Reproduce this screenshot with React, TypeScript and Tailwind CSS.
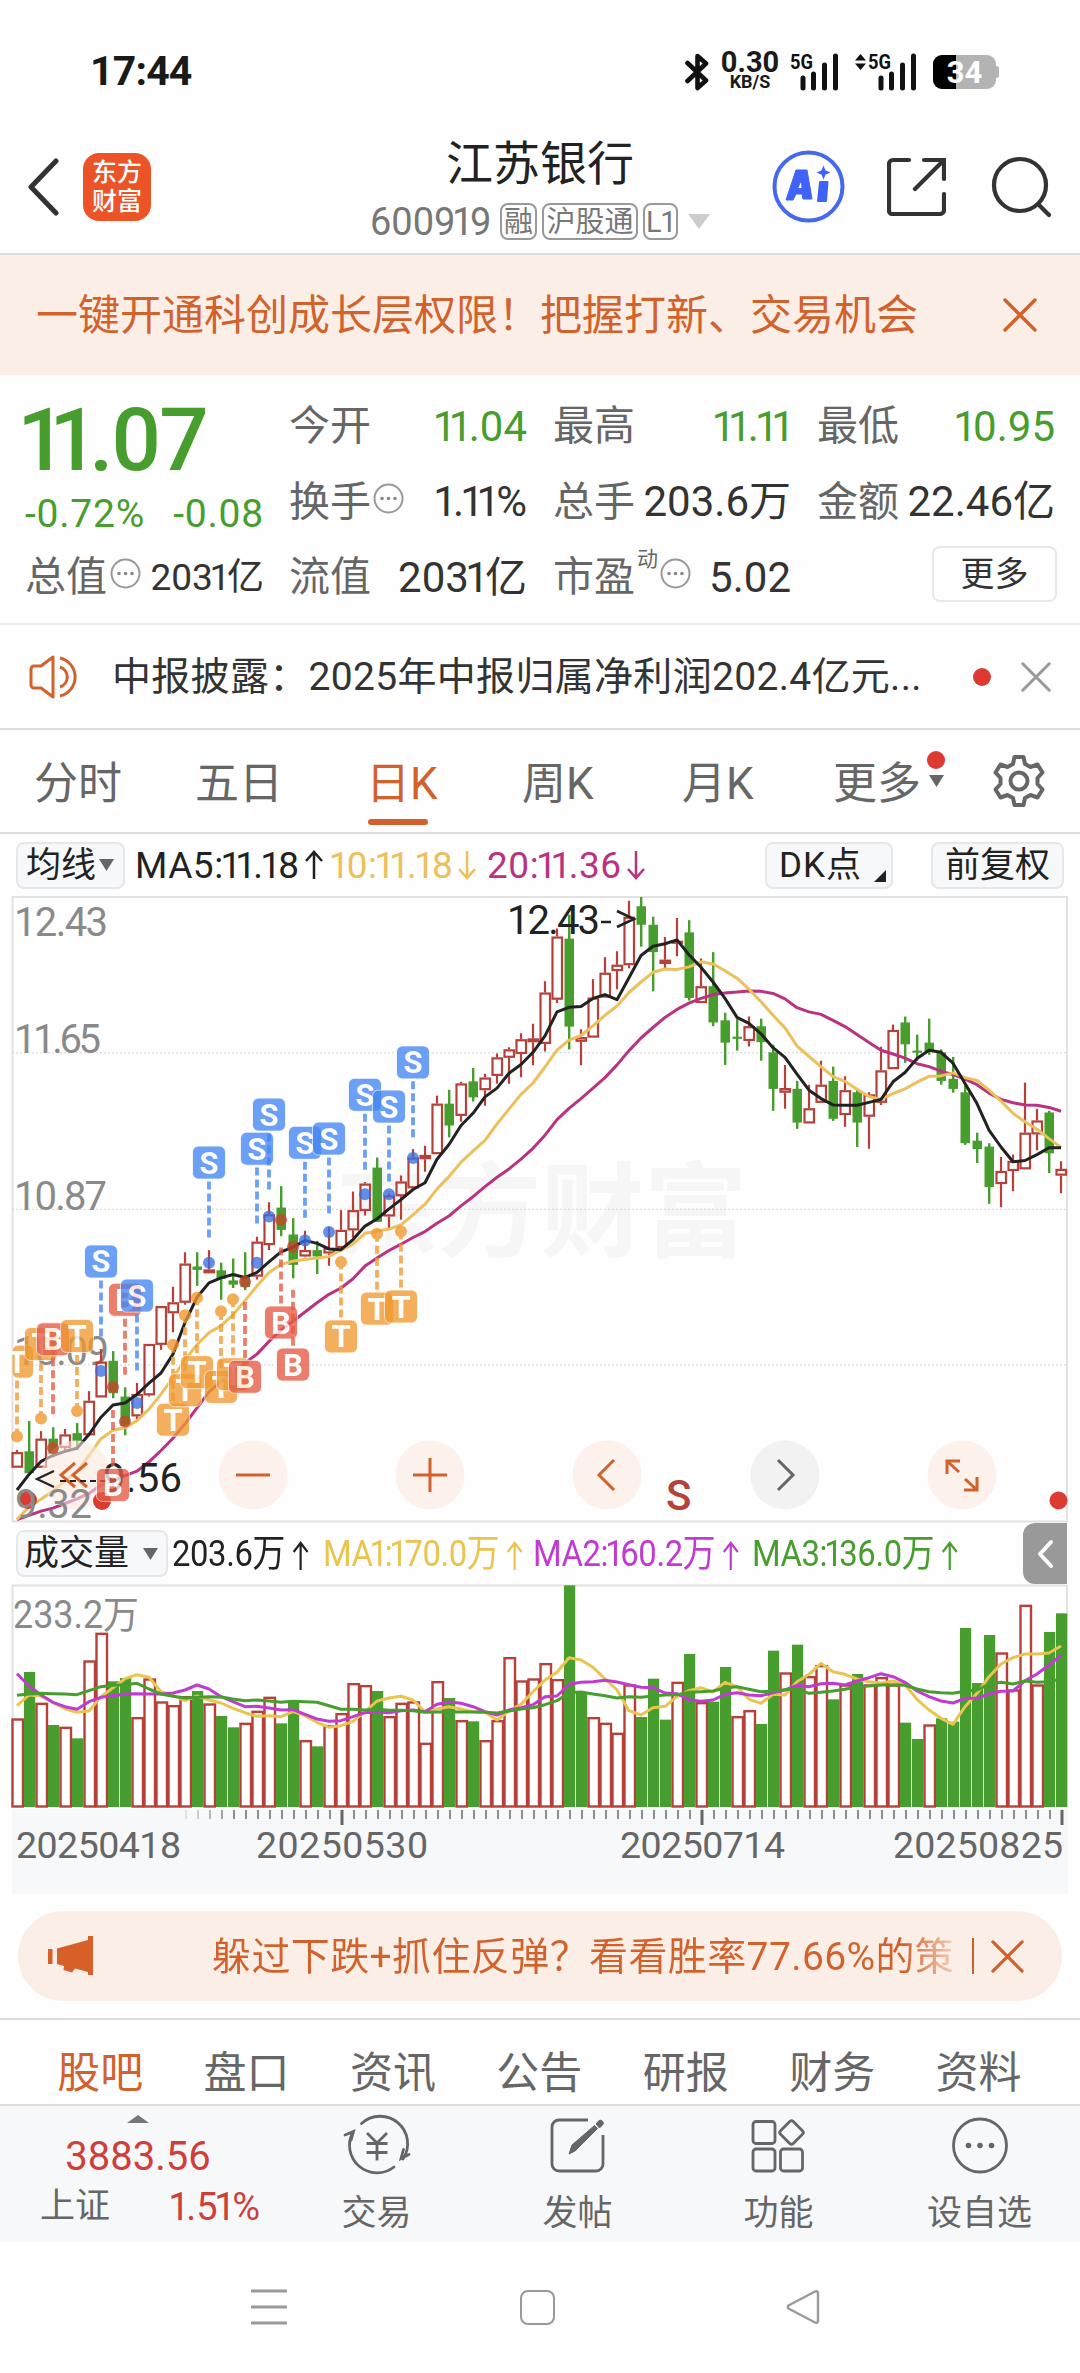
import React from 'react';

type Candle = [kind: 'r' | 'g', high: number, top: number, bottom: number, low: number];

// chart levels, measured downwards from the top of the price panel
const candles: Candle[] = [
  ['r', 1355, 1360, 1397, 1397], ['g', 1286, 1358, 1410, 1410], ['r', 1310, 1328, 1397, 1397], ['g', 1301, 1328, 1365, 1372],
  ['r', 1305, 1318, 1350, 1355], ['g', 1291, 1315, 1333, 1355], ['r', 1215, 1238, 1320, 1320], ['r', 1115, 1145, 1230, 1230],
  ['g', 1120, 1143, 1220, 1232], ['g', 1206, 1228, 1298, 1320], ['r', 1196, 1222, 1275, 1283], ['r', 1103, 1103, 1225, 1228],
  ['r', 1013, 1013, 1105, 1117], ['r', 967, 1004, 1030, 1075], ['r', 885, 912, 1005, 1010], ['g', 885, 919, 927, 965],
  ['r', 880, 926, 935, 935], ['g', 910, 928, 948, 998], ['g', 900, 952, 962, 970], ['g', 885, 945, 968, 975],
  ['r', 848, 860, 943, 950], ['r', 766, 795, 868, 880], ['g', 728, 779, 832, 847], ['g', 804, 843, 915, 947],
  ['r', 834, 880, 895, 897], ['g', 858, 880, 895, 937], ['r', 825, 875, 888, 917], ['r', 785, 832, 875, 875],
  ['r', 741, 785, 833, 850], ['r', 718, 722, 787, 798], ['g', 660, 684, 813, 813], ['r', 745, 750, 800, 830],
  ['r', 703, 717, 752, 808], ['r', 640, 660, 733, 733], ['r', 632, 654, 664, 694], ['r', 513, 532, 652, 652],
  ['g', 499, 532, 584, 612], ['r', 480, 484, 561, 575], ['g', 447, 479, 517, 527], ['r', 461, 470, 500, 537],
  ['r', 413, 422, 466, 485], ['r', 398, 403, 423, 485], ['r', 365, 379, 414, 469], ['r', 342, 377, 386, 441],
  ['r', 241, 268, 390, 408], ['r', 116, 135, 285, 293], ['g', 83, 140, 349, 403], ['r', 355, 374, 385, 441],
  ['r', 236, 280, 375, 375], ['r', 184, 221, 280, 280], ['r', 170, 202, 217, 260], ['r', 50, 88, 203, 210],
  ['g', 41, 63, 107, 159], ['g', 88, 107, 172, 265], ['r', 136, 190, 200, 212], ['r', 91, 145, 150, 182],
  ['g', 96, 125, 281, 287], ['r', 187, 253, 293, 293], ['g', 172, 253, 339, 348], ['g', 316, 334, 387, 440],
  ['g', 331, 373, 378, 406], ['r', 325, 348, 383, 396], ['g', 330, 348, 386, 430], ['g', 392, 410, 497, 549],
  ['r', 440, 495, 506, 544], ['g', 478, 497, 577, 592], ['r', 487, 543, 579, 579], ['r', 430, 487, 530, 530],
  ['g', 444, 478, 568, 573], ['r', 467, 500, 559, 587], ['g', 500, 505, 577, 635], ['r', 505, 510, 563, 639],
  ['r', 397, 453, 530, 535], ['r', 344, 357, 450, 450], ['g', 325, 339, 391, 435], ['g', 368, 406, 411, 430],
  ['g', 330, 387, 408, 416], ['g', 403, 410, 478, 487], ['g', 421, 473, 497, 506], ['g', 485, 505, 626, 630],
  ['g', 601, 620, 640, 673], ['g', 626, 634, 730, 770], ['r', 659, 692, 723, 778], ['r', 653, 668, 692, 740],
  ['r', 482, 601, 688, 688], ['r', 545, 572, 605, 643], ['g', 549, 553, 650, 697], ['r', 669, 687, 703, 745],
];

const ma5 = [1450, 1413, 1382, 1368, 1358, 1351, 1318, 1277, 1248, 1243, 1223, 1196, 1172, 1127, 1052, 992, 958, 946, 938, 945, 933, 908, 884, 873, 857, 864, 877, 879, 855, 823, 806, 782, 760, 736, 720, 664, 629, 584, 555, 516, 495, 460, 439, 410, 371, 314, 303, 301, 282, 273, 285, 233, 180, 158, 152, 143, 178, 208, 243, 282, 327, 341, 366, 399, 422, 462, 500, 520, 535, 536, 536, 529, 522, 480, 458, 425, 405, 410, 436, 484, 532, 595, 635, 670, 667, 653, 637, 637];
const ma10 = [1520, 1490, 1472, 1452, 1428, 1405, 1368, 1328, 1308, 1302, 1285, 1258, 1222, 1183, 1140, 1105, 1076, 1060, 1034, 1000, 965, 933, 914, 906, 902, 899, 895, 880, 865, 840, 835, 830, 820, 796, 771, 735, 705, 671, 645, 619, 580, 545, 510, 483, 445, 405, 381, 370, 347, 322, 300, 268, 243, 220, 212, 213, 207, 195, 200, 216, 234, 260, 290, 322, 352, 395, 420, 444, 468, 479, 498, 515, 522, 508, 497, 481, 467, 466, 459, 470, 477, 500, 526, 555, 575, 593, 615, 636];
const ma20 = [1520, 1510, 1500, 1493, 1482, 1471, 1458, 1438, 1428, 1416, 1405, 1383, 1356, 1327, 1293, 1255, 1217, 1192, 1170, 1148, 1127, 1097, 1070, 1049, 1027, 1005, 985, 970, 948, 918, 899, 881, 866, 850, 836, 816, 799, 775, 753, 729, 707, 687, 664, 638, 607, 570, 543, 520, 495, 470, 440, 406, 376, 351, 327, 308, 293, 282, 273, 269, 267, 264, 265, 270, 283, 304, 314, 320, 334, 349, 368, 387, 405, 414, 424, 437, 444, 455, 463, 474, 487, 507, 522, 530, 535, 536, 541, 550];

// every volume bar by its top edge; colours follow volumeKinds
const volumes = [627, 486, 580, 645, 652, 685, 453, 370, 514, 504, 623, 507, 576, 587, 560, 543, 582, 618, 652, 640, 604, 562, 640, 578, 692, 709, 647, 611, 521, 527, 543, 620, 580, 576, 700, 515, 564, 632, 634, 692, 632, 443, 513, 507, 461, 509, 226, 547, 623, 640, 670, 525, 621, 506, 629, 517, 432, 578, 575, 471, 620, 602, 642, 422, 489, 404, 500, 467, 568, 525, 492, 525, 503, 525, 638, 687, 645, 625, 635, 354, 519, 375, 429, 540, 286, 525, 366, 310];
const volumeKinds = 'rgrgrgrrggrrrrrgrggrrrggrgrrrrgrrrrrgrgrrrrrrrggrrrrgggrgrggrrggrgrrgrgrrrggrgggggrrrrgg';
const vma1 = [587, 555, 558, 578, 596, 607, 603, 560, 533, 506, 494, 502, 545, 556, 572, 558, 570, 579, 595, 608, 619, 617, 620, 605, 617, 637, 652, 647, 634, 605, 573, 564, 559, 570, 605, 597, 590, 597, 605, 607, 630, 603, 583, 545, 510, 487, 443, 450, 472, 507, 540, 602, 615, 593, 589, 560, 542, 533, 546, 517, 530, 568, 580, 553, 555, 515, 493, 460, 485, 493, 507, 515, 520, 513, 524, 568, 600, 625, 643, 590, 550, 500, 462, 443, 432, 432, 429, 408];
const vma2 = [491, 528, 555, 577, 590, 598, 575, 562, 557, 552, 551, 552, 552, 549, 540, 525, 537, 560, 575, 590, 589, 594, 600, 599, 613, 627, 634, 632, 620, 608, 606, 608, 602, 600, 605, 583, 576, 580, 590, 605, 615, 600, 593, 584, 560, 558, 523, 517, 515, 511, 516, 524, 532, 533, 549, 551, 569, 574, 570, 553, 548, 555, 557, 548, 540, 526, 530, 521, 520, 525, 513, 503, 491, 500, 517, 543, 560, 573, 579, 565, 565, 552, 544, 543, 512, 492, 465, 436];
const vma3 = [556, 552, 550, 551, 552, 554, 542, 530, 526, 524, 520, 537, 552, 559, 564, 562, 560, 561, 567, 572, 570, 573, 577, 574, 575, 577, 587, 598, 598, 600, 598, 601, 601, 602, 607, 606, 605, 606, 606, 607, 609, 603, 597, 593, 584, 572, 548, 546, 552, 557, 564, 560, 562, 558, 555, 554, 547, 545, 543, 534, 530, 538, 545, 543, 539, 537, 550, 547, 543, 538, 530, 528, 525, 524, 526, 537, 545, 548, 550, 544, 540, 523, 517, 522, 513, 517, 515, 507];

type Marker = { i: number; text: 'S' | 'B' | 'T'; label: number; dot: number; above: boolean };

const markers: Marker[] = [
  { i: 0, text: 'T', label: 1145, dot: 1323, above: true },
  { i: 2, text: 'T', label: 1103, dot: 1280, above: true },
  { i: 3, text: 'B', label: 1092, dot: 1350, above: true },
  { i: 5, text: 'T', label: 1084, dot: 1262, above: true },
  { i: 7, text: 'S', label: 907, dot: 1167, above: true },
  { i: 8, text: 'B', label: 1438, dot: 1205, above: false },
  { i: 9, text: 'B', label: 998, dot: 1287, above: true },
  { i: 10, text: 'S', label: 988, dot: 1243, above: true },
  { i: 13, text: 'T', label: 1283, dot: 1105, above: false },
  { i: 14, text: 'T', label: 1213, dot: 1035, above: false },
  { i: 15, text: 'T', label: 1170, dot: 993, above: false },
  { i: 16, text: 'S', label: 672, dot: 910, above: true },
  { i: 17, text: 'T', label: 1205, dot: 1025, above: false },
  { i: 18, text: 'T', label: 1175, dot: 997, above: false },
  { i: 19, text: 'B', label: 1181, dot: 955, above: false },
  { i: 20, text: 'S', label: 639, dot: 910, above: true },
  { i: 21, text: 'S', label: 558, dot: 800, above: true },
  { i: 22, text: 'B', label: 1052, dot: 808, above: false },
  { i: 23, text: 'B', label: 1152, dot: 872, above: false },
  { i: 24, text: 'S', label: 625, dot: 857, above: true },
  { i: 26, text: 'S', label: 615, dot: 837, above: true },
  { i: 27, text: 'T', label: 1085, dot: 908, above: false },
  { i: 29, text: 'S', label: 511, dot: 747, above: true },
  { i: 30, text: 'T', label: 1019, dot: 841, above: false },
  { i: 31, text: 'S', label: 539, dot: 747, above: true },
  { i: 32, text: 'T', label: 1014, dot: 836, above: false },
  { i: 33, text: 'S', label: 434, dot: 661, above: true },
];

const markerColors = {
  S: { box: '#4485f4', dot: '#3b6fe0' },
  B: { box: '#e65a45', dot: '#c8452a' },
  T: { box: '#f09a30', dot: '#f0962a' },
};

const RED = '#b5413a';
const GREEN = '#479d2d';

const px = (i: number) => 17 + i * 12;
const py = (v: number) => 1 + (v - 41) / 2.376;
const vy = (v: number) => (v - 222) / 3;
const line = (values: number[], y: (v: number) => number) => values.map((v, i) => `${px(i)},${y(v).toFixed(1)}`).join(' ');

// the digit 1 is set narrower than the others
const Num = ({ children }: { children: string }) => (
  <span>
    {children.split(/(1)/).map((part, i) => (part === '1' ? <span key={i} className="-mx-[0.09em]">1</span> : part))}
  </span>
);

const More = () => (
  <svg className="shrink-0" width="31" height="31" viewBox="0 0 31 31">
    <circle cx="15.5" cy="15.5" r="14" fill="none" stroke="#999" strokeWidth="2" />
    <circle cx="9" cy="15.5" r="1.8" fill="#888" />
    <circle cx="15.5" cy="15.5" r="1.8" fill="#888" />
    <circle cx="22" cy="15.5" r="1.8" fill="#888" />
  </svg>
);

const Close = ({ size, color }: { size: number; color: string }) => (
  <svg className="shrink-0" width={size} height={size} viewBox="0 0 34 34">
    <path d="M2 2 32 32M32 2 2 32" stroke={color} strokeWidth="3.4" strokeLinecap="round" />
  </svg>
);

const Signal = () => (
  <svg className="overflow-visible" width="50" height="38" viewBox="0 0 50 38">
    <text x="0" y="16" fontSize="21" fontWeight="700" textLength="23" lengthAdjust="spacingAndGlyphs" fill="#111">5G</text>
    <path d="M13 25v10M23.500 21v14M34.500 12v23M45.500 3v32" stroke="#111" strokeWidth="5" strokeLinecap="round" />
  </svg>
);

const StatusBar = () => (
  <div className="flex h-[120px] items-center pt-[23px] pr-[81px] pl-[90px] text-[#1a1a1a]">
    <span className="text-[41px] leading-none font-bold tracking-[-0.02em]">17:44</span>
    <svg className="ml-auto" width="24" height="38" viewBox="0 0 24 38">
      <path d="M2.500 10 21 27.500 12.500 35V3L21 10.500 2.500 28" fill="none" stroke="#111" strokeWidth="4.600" strokeLinecap="round" strokeLinejoin="round" />
    </svg>
    <div className="ml-3 flex w-[58px] flex-col items-center font-bold">
      <span className="text-[29px] leading-[21px]">0.30</span>
      <span className="text-[18px] leading-[18px]">KB/S</span>
    </div>
    <div className="ml-[11px]"><Signal /></div>
    <svg className="ml-[15px]" width="11" height="38" viewBox="0 0 11 38">
      <path d="M0 7.500 5.500 1l5.500 6.500ZM0 10.500l5.500 6.500 5.500-6.500Z" fill="#111" />
    </svg>
    <div className="ml-0.5"><Signal /></div>
    <div className="ml-[15px] flex items-center">
      <div className="relative h-[34px] w-[63px] overflow-hidden rounded-[9px] bg-[#b3b3b3]">
        <div className="h-full w-[23px] bg-black" />
        <span className="absolute inset-0 text-center text-[31px] leading-[35px] font-bold text-white">34</span>
      </div>
      <div className="h-3 w-[3px] rounded-r bg-[#b3b3b3]" />
    </div>
  </div>
);

const Header = () => (
  <div className="flex h-[135px] items-center border-b-2 border-[#dcdcdc]">
    <div className="flex w-[369px] items-center pl-[27px]">
      <svg width="32" height="58" viewBox="0 0 32 58">
        <path d="M29 3 4 29l25 26" fill="none" stroke="#333" strokeWidth="5" strokeLinecap="round" strokeLinejoin="round" />
      </svg>
      <div className="ml-6 flex h-[68px] w-[68px] flex-col items-center justify-center rounded-2xl bg-[#ec5428] text-[25px] leading-[29px] font-medium text-white">
        <span>东方</span>
        <span>财富</span>
      </div>
    </div>
    <div className="flex w-[342px] flex-col items-center pt-2.5">
      <div className="text-[47px] leading-[60px] text-[#222]">江苏银行</div>
      <div className="flex h-[56px] items-center text-[#777]">
        <span className="w-[124px] text-[38px] leading-none"><Num>600919</Num></span>
        <span className="ml-[6px] h-[37px] w-[37px] rounded-lg border-2 border-[#999] text-center text-[29px] leading-[34px]">融</span>
        <span className="ml-[5px] h-[37px] w-[96px] rounded-lg border-2 border-[#999] text-center text-[29px] leading-[34px]">沪股通</span>
        <span className="ml-[5px] h-[37px] w-[35px] rounded-lg border-2 border-[#999] text-center text-[29px] leading-[34px] tracking-[-0.05em]">L1</span>
        <svg className="ml-2.5" width="22" height="15" viewBox="0 0 22 15"><path d="M0 0h22L11 15Z" fill="#ccc" /></svg>
      </div>
    </div>
    <svg className="ml-[61px]" width="73" height="73" viewBox="0 0 73 73">
      <circle cx="36.500" cy="36.500" r="34" fill="none" stroke="#4468ee" strokeWidth="4" />
      <path fillRule="evenodd" d="M24 20h11l5 29H31l-1-5h-6l-3 6h-7ZM29.500 30l-4 8.500h4.500Z" fill="#3f63f7" stroke="#3f63f7" strokeWidth="1" strokeLinejoin="round" />
      <path d="M48 32h7.500l-1.500 19h-8Z" fill="#3f63f7" stroke="#3f63f7" strokeWidth="2" strokeLinejoin="round" />
      <path d="M51.500 17.500l1.500 3.500 3.500 1.500-3.500 1.500-1.500 3.500-1.500-3.500-3.500-1.500 3.500-1.500Z" fill="#3f63f7" stroke="#3f63f7" strokeWidth="1.500" />
    </svg>
    <svg className="ml-[42px]" width="59" height="59" viewBox="0 0 59 59">
      <path d="M22 3H6a4 4 0 0 0-4 4v47a3 3 0 0 0 3 3h48a4 4 0 0 0 4-4V37M37 3h20v19M57 3 28 32" fill="none" stroke="#333" strokeWidth="4.200" strokeLinecap="round" />
    </svg>
    <svg className="ml-[44px]" width="62" height="62" viewBox="0 0 62 62">
      <circle cx="30" cy="29" r="26" fill="none" stroke="#333" strokeWidth="4.200" />
      <path d="M48 48 59 59" stroke="#333" strokeWidth="4.200" strokeLinecap="round" />
    </svg>
  </div>
);

interface FieldProps {
  name: string;
  value: string;
  green?: boolean;
  sup?: string;
  more?: boolean;
}

const Field: React.FC<FieldProps> = ({ name, value, green, sup, more }) => (
  <div className="flex h-[75.5px] items-center whitespace-nowrap">
    <span className="text-[41px] leading-none text-[#666]">{name}</span>
    {sup && <span className="-mt-9 ml-0.5 text-[21px] leading-none text-[#666]">{sup}</span>}
    {more && <span className="-mt-2 ml-0.5"><More /></span>}
    <span className={`ml-auto text-[42px] leading-none ${green ? 'text-[#479d2d]' : 'text-[#333]'}`}><Num>{value}</Num></span>
  </div>
);

const Quote = () => (
  <div className="flex h-[250px] border-b-2 border-[#ebebeb] pt-[14px] whitespace-nowrap">
    <div className="w-[289px] pr-[25px] pl-[25px]">
      <div className="h-[101px] text-[87px] leading-[103px] font-medium tracking-[-0.02em] text-[#479d2d]"><Num>11.07</Num></div>
      <div className="flex h-[49px] items-center justify-between text-[39px] tracking-[0.02em] text-[#479d2d]">
        <Num>-0.72%</Num>
        <Num>-0.08</Num>
      </div>
      <div className="flex h-[77px] items-center">
        <span className="text-[41px] leading-none text-[#666]">总值</span>
        <span className="-mt-2 ml-[3px]"><More /></span>
        <span className="ml-auto text-[37px] leading-none text-[#333]"><Num>2031亿</Num></span>
      </div>
    </div>
    <div className="w-[238px]">
      <Field name="今开" value="11.04" green />
      <Field name="换手" value="1.11%" more />
      <Field name="流值" value="2031亿" />
    </div>
    <div className="ml-[26px] w-[238px]">
      <Field name="最高" value="11.11" green />
      <Field name="总手" value="203.6万" />
      <Field name="市盈" value="5.02" sup="动" more />
    </div>
    <div className="ml-[26px] w-[238px]">
      <Field name="最低" value="10.95" green />
      <Field name="金额" value="22.46亿" />
      <div className="mt-[6px] ml-auto -mr-0.5 h-[56px] w-[125px] rounded-lg border-2 border-[#e8e8e8] text-center text-[34px] leading-[53px] text-[#333]">更多</div>
    </div>
  </div>
);

const News = () => (
  <div className="flex h-[105px] items-center border-b-2 border-[#dcdcdc] pr-[29px] pl-[29px]">
    <svg width="52" height="44" viewBox="0 0 52 44">
      <path d="M24 2v40L12 33H5a3 3 0 0 1-3-3V14a3 3 0 0 1 3-3h7Z" fill="none" stroke="#d2622c" strokeWidth="3" strokeLinejoin="round" />
      <path d="M31 12a10.500 10.500 0 0 1 0 20M31 3a19.500 19.500 0 0 1 0 38" fill="none" stroke="#d2622c" strokeWidth="3" />
    </svg>
    <span className="ml-[31px] w-[808px] pt-0.5 text-[39px] leading-none tracking-[0.008em] whitespace-nowrap text-[#333]">中报披露：<Num>2025年中报归属净利润202.4亿元...</Num></span>
    <span className="ml-auto h-[18px] w-[18px] rounded-full bg-[#dd3b32]" />
    <span className="ml-[30px]"><Close size={30} color="#999" /></span>
  </div>
);

const periods = [
  { name: '分时', width: 'w-[161px]' },
  { name: '五日', width: 'w-[171px]' },
  { name: '日K', width: 'w-[156px]', active: true },
  { name: '周K', width: 'w-[160px]' },
  { name: '月K', width: 'w-[151px]' },
  { name: '更多', width: 'w-[93px]' },
];

const PeriodTabs = () => (
  <div className="flex h-[104px] items-center border-b-2 border-[#dcdcdc] pl-[34px]">
    {periods.map((p) => (
      <div key={p.name} className={`relative shrink-0 pt-1.5 text-[44px] leading-[96px] whitespace-nowrap ${p.width} ${p.active ? 'text-[#d2622c]' : 'text-[#666]'}`}>
        {p.name}
        {p.active && <span className="absolute bottom-[7px] left-0.5 h-1.5 w-[60px] rounded-full bg-[#d2622c]" />}
      </div>
    ))}
    <div className="relative ml-[3px] w-4">
      <span className="absolute -top-[24px] left-[-2px] h-[18px] w-[18px] rounded-full bg-[#dd3b32]" />
      <svg width="15" height="12" viewBox="0 0 15 12"><path d="M0 0h15L7.500 12Z" fill="#666" /></svg>
    </div>
    <svg className="ml-[47px]" width="54" height="54" viewBox="0 0 54 54">
      <path d="M22.500 3h9l1.500 7 5.500 3 7-2.500 5 8-5 5.500v6l5 5.500-5 8-7-2.500-5.500 3-1.500 7h-9l-1.500-7-5.500-3-7 2.500-5-8 5-5.500v-6l-5-5.500 5-8 7 2.500 5.500-3Z" fill="none" stroke="#666" strokeWidth="4" strokeLinejoin="round" />
      <circle cx="27" cy="27" r="8.500" fill="none" stroke="#666" strokeWidth="4" />
    </svg>
  </div>
);

const chip = 'flex h-[47px] shrink-0 items-center rounded-lg border-2 border-[#e6e7ea] bg-[#f7f8fa] text-[35px] leading-none text-[#222]';

const Arrow = ({ up }: { up?: boolean }) => (
  <svg className="ml-1 inline-block" width="20" height="30" viewBox="0 0 20 30">
    <path d={up ? 'M10 29V2M2 11l8-9 8 9' : 'M10 1v27M2 19l8 9 8-9'} fill="none" stroke="currentColor" strokeWidth="2.500" />
  </svg>
);

const MaBar = () => (
  <div className="flex h-[62px] items-center whitespace-nowrap">
    <div className={`${chip} ml-4 w-[109px] pl-[8px]`}>
      均线
      <svg className="ml-[3px]" width="15" height="12" viewBox="0 0 15 12"><path d="M0 0h15L7.500 12Z" fill="#666" /></svg>
    </div>
    <div className="ml-[10px] flex w-[630px] items-center text-[37px] leading-none tracking-[0.015em]">
      <span className="flex w-[197px] items-center text-[#222]"><Num>MA5:11.18</Num><Arrow up /></span>
      <span className="flex w-[155px] items-center text-[#ecc05c]"><Num>10:11.18</Num><Arrow /></span>
      <span className="flex items-center text-[#b93380]"><Num>20:11.36</Num><Arrow /></span>
    </div>
    <div className={`${chip} relative w-[128px] pl-[12px] tracking-[0.03em]`}>
      DK点
      <svg className="absolute right-[5px] bottom-[5px]" width="12" height="12" viewBox="0 0 12 12"><path d="M12 0v12H0Z" fill="#222" /></svg>
    </div>
    <div className={`${chip} ml-[38px] w-[133px] justify-center`}>前复权</div>
  </div>
);

const roundButtons = [
  { x: 76, icon: 'M-1-12-15 0-1 12M11-12-3 0 11 12' },
  { x: 253, icon: 'M-17 0H17' },
  { x: 430, icon: 'M-17 0H17M0-17V17' },
  { x: 607, icon: 'M7-15-8 0 7 15' },
  { x: 785, icon: 'M-7-15 8 0-7 15', muted: true },
  { x: 962, icon: 'M-15-1V-14H-2M-15-14-3-3M15 2V15H2M15 15 3 4' },
];

const PriceChart = () => (
  <svg className="block overflow-visible" width="1080" height="627" viewBox="0 0 1080 627">
    <text x="335" y="353" fontSize="103" fontWeight="700" fill="#f6f6f6" textLength="412">东方财富</text>
    <rect x="12.500" y="1" width="1054.500" height="624.500" fill="none" stroke="#e2e2e2" strokeWidth="2" />
    {[411, 783, 1153].map((v) => (
      <path key={v} d={`M12 ${py(v)}H1067`} stroke="#d4d4d4" strokeWidth="1" strokeDasharray="2 2" />
    ))}
    <g fontSize="40" fill="#8a8a8a">
      <text x="14" y="40" textLength="94">12.43</text>
      <text x="14" y="157" textLength="87">11.65</text>
      <text x="14" y="314" textLength="93">10.87</text>
      <text x="14" y="469" textLength="95">10.09</text>
    </g>
    {candles.map(([kind, high, top, bottom, low], i) => {
      const x = px(i);
      const t = py(top);
      const b = py(bottom);
      if (kind === 'g') {
        return (
          <g key={i} fill={GREEN}>
            <rect x={x - 1} y={py(high)} width="2.400" height={py(low) - py(high)} />
            <rect x={x - 4.5} y={t} width="9.500" height={b - t} />
          </g>
        );
      }
      return (
        <g key={i} stroke={RED} strokeWidth="2.200" fill="none">
          <path d={`M${x} ${py(high)}V${t}M${x} ${b}V${py(low)}`} />
          <rect x={x - 4.5} y={t + 1} width="9.500" height={Math.max(b - t - 2, 1)} />
        </g>
      );
    })}
    <g fill="none" strokeWidth="3" strokeLinejoin="round">
      <polyline points={line(ma20, py)} stroke="#b93380" />
      <polyline points={line(ma10, py)} stroke="#ecc05c" />
      <polyline points={line(ma5, py)} stroke="#222" />
    </g>
    {roundButtons.map((b) => (
      <g key={b.x} transform={`translate(${b.x} 579)`}>
        <circle r="34.500" fill={b.muted ? '#f2f2f2' : '#fae8dd'} opacity={b.muted ? 1 : 0.6} />
        <path d={b.icon} fill="none" stroke={b.muted ? '#666' : '#d2622c'} strokeWidth="3" />
      </g>
    ))}
    <g fill="#dd3b32">
      <circle cx="28" cy="604" r="9" />
      <circle cx="102" cy="605" r="9" />
      <circle cx="1058.500" cy="604.500" r="9" />
    </g>
    <text x="15" y="622" fontSize="40" fill="#8a8a8a" textLength="77">9.32</text>
    <text x="666" y="614" fontSize="42" fontWeight="500" fill={RED}>S</text>
    <path d="M54 575 37 583l17 8" fill="none" stroke="#222" strokeWidth="2.200" />
    <path d="M60 585h46" stroke="#222" strokeWidth="2" strokeDasharray="6 4" />
    <text x="103" y="596" fontSize="40" fill="#222" textLength="79">9.56</text>
    <text x="507" y="38" fontSize="40" fill="#222" textLength="93">12.43</text>
    <path d="M601 26h10" stroke="#222" strokeWidth="2.500" />
    <path d="M617 15 634 23l-17 8" fill="none" stroke="#222" strokeWidth="2.500" />
    {markers.map((m) => {
      const x = px(m.i);
      const y = py(m.label);
      const from = m.above ? py(m.label + 45) : py(m.label - 178);
      const c = markerColors[m.text];
      return (
        <g key={m.i} opacity="0.78">
          <path d={`M${x} ${from}v56`} stroke={c.box} strokeWidth="3.800" strokeDasharray="8 4" />
          <circle cx={x} cy={py(m.dot)} r="6" fill={c.dot} />
          <rect x={Math.max(x - 16.5, 12)} y={y - 16.5} width={m.i === 0 ? 21.5 : 33} height="33" rx="6" fill={c.box} stroke="#fff" strokeWidth="0.800" />
          <text x={x} y={y + 11} fontSize="31" fontWeight="700" textAnchor="middle" fill="#fff">{m.text}</text>
        </g>
      );
    })}
  </svg>
);

const VolumeBar = () => (
  <div className="flex h-[61px] items-center whitespace-nowrap">
    <div className={`${chip} ml-4 w-[152px] pl-[6px]`}>
      成交量
      <svg className="ml-[14px]" width="15" height="12" viewBox="0 0 15 12"><path d="M0 0h15L7.500 12Z" fill="#666" /></svg>
    </div>
    {[
      { text: '203.6万', box: 'w-[151px] text-[#222]' },
      { text: 'MA1:170.0万', box: 'w-[210px] text-[#e9c54f]' },
      { text: 'MA2:160.2万', box: 'w-[219px] text-[#c03bd0]' },
      { text: 'MA3:136.0万', box: 'w-[271px] text-[#479d2d]' },
    ].map((m, i) => (
      <div key={m.text} className={`shrink-0 ${i === 0 ? 'ml-1' : ''} ${m.box}`}>
        <div className="flex w-[260px] origin-left scale-x-[0.875] items-center text-[37.5px] leading-none tracking-[-0.012em]">
          <Num>{m.text}</Num>
          <span className="ml-1"><Arrow up /></span>
        </div>
      </div>
    ))}
    <div className="flex h-[61px] w-11 shrink-0 items-center justify-center rounded-l-xl bg-[#999]">
      <svg width="17" height="30" viewBox="0 0 17 30"><path d="M14 3 3 15l11 12" fill="none" stroke="#fff" strokeWidth="4" strokeLinecap="round" strokeLinejoin="round" /></svg>
    </div>
  </div>
);

const VolumeChart = () => (
  <svg className="block" width="1080" height="310" viewBox="0 0 1080 310">
    <rect x="12" y="225" width="1056" height="85" fill="#f7f8fa" />
    <path d="M12.500 223V1.500H1067V223" fill="none" stroke="#e2e2e2" strokeWidth="2" />
    <text x="13" y="44" fontSize="38" fill="#8a8a8a" textLength="126" lengthAdjust="spacingAndGlyphs">233.2万</text>
    {volumes.map((v, i) =>
      volumeKinds[i] === 'g' ? (
        <rect key={i} x={px(i) - 5} y={vy(v)} width="11.200" height={223 - vy(v)} fill={GREEN} />
      ) : (
        <rect key={i} x={px(i) - 4.5} y={vy(v) + 0.5} width="10.500" height={222 - vy(v)} fill="#fff" stroke={RED} strokeWidth="2.400" />
      ),
    )}
    <g fill="none" strokeWidth="3" strokeLinejoin="round">
      <polyline points={line(vma1, vy)} stroke="#e9c54f" />
      <polyline points={line(vma2, vy)} stroke="#c03bd0" />
      <polyline points={line(vma3, vy)} stroke="#479d2d" />
    </g>
    {volumes.map((_, i) => {
      if (i < 14) return null;
      const major = i === 27 || i === 57 || i === 87;
      return <path key={i} d={`M${px(i) + 1} 226v${major ? 15 : 9}`} stroke={major ? '#666' : '#8c8c8c'} strokeWidth={major ? 3 : 2} opacity={Math.min(1, (i - 13) / 5)} />;
    })}
    <g fontSize="37.500" fill="#666">
      <text x="16" y="274" textLength="165">20250418</text>
      <text x="256" y="274" textLength="172">20250530</text>
      <text x="620" y="274" textLength="165">20250714</text>
      <text x="893" y="274" textLength="170">20250825</text>
    </g>
  </svg>
);

const Promo = () => (
  <div className="mx-[18px] mt-[17px] mb-[17px] flex h-[90px] items-center rounded-full bg-[#fbeee6] pr-[38px] pl-[30px]">
    <svg width="45" height="40" viewBox="0 0 45 40">
      <path d="M0 13h4.500v15H0ZM9 12.500 40 4V0h5v39h-5v-3l-13-3.500-3 4-8.500-2.500.5-4-7-2Z" fill="#d75f28" />
    </svg>
    <span className="ml-[119px] w-[744px] overflow-hidden bg-linear-to-r from-[#d2622c] from-93% to-[#d2622c33] bg-clip-text pt-0.5 text-[39px] leading-[60px] tracking-[0.01em] whitespace-nowrap text-transparent">
      躲过下跌+抓住反弹？看看胜率77.66%的策
    </span>
    <span className="ml-auto h-[36px] w-0.5 bg-[#d2622c]" />
    <span className="ml-[17px]"><Close size={33} color="#d2622c" /></span>
  </div>
);

const bottomItems = [
  {
    name: '交易',
    icon: (
      <g fill="none" stroke="#666" strokeWidth="2.800" strokeLinecap="round">
        <path d="M16.500 8.500A27.500 27.500 0 0 1 58 44M64 39.500l-8 4 2.500-9M49 52A27.500 27.500 0 0 1 8 17M0 20l8.500-3.500L6 25" />
        <path d="m22 18 10 10 10-10M21.500 28.500h21M21.500 37.500h21M32 28.500v17" strokeLinecap="butt" />
      </g>
    ),
  },
  {
    name: '发帖',
    icon: (
      <g>
        <path d="M42 5H13a7 7 0 0 0-7 7v37a7 7 0 0 0 7 7h37a7 7 0 0 0 7-7V20" fill="none" stroke="#666" strokeWidth="2.800" />
        <path d="m23 39 3-9 22.500-19.500 3 3L29 36ZM50 9l3-3.500a3 3 0 0 1 4 4L53.500 13Z" fill="#666" stroke="#666" strokeWidth="1" />
      </g>
    ),
  },
  {
    name: '功能',
    icon: (
      <g fill="none" stroke="#666" strokeWidth="2.800">
        <rect x="6" y="6.500" width="22" height="22" rx="3" />
        <rect x="6" y="34" width="22" height="22" rx="3" />
        <rect x="33.500" y="34" width="22" height="22" rx="3" />
        <rect x="35.500" y="8.500" width="18" height="18" rx="2.500" transform="rotate(45 44.500 17.500)" />
      </g>
    ),
  },
  {
    name: '设自选',
    icon: (
      <g>
        <circle cx="32" cy="30.500" r="26.500" fill="none" stroke="#666" strokeWidth="2.800" />
        <circle cx="20.500" cy="30.500" r="2.800" fill="#666" />
        <circle cx="32" cy="30.500" r="2.800" fill="#666" />
        <circle cx="43.500" cy="30.500" r="2.800" fill="#666" />
      </g>
    ),
  },
];

const BottomBar = () => (
  <div className="flex h-[136px] bg-[#f7f8fa]">
    <div className="w-[276px] pt-[9px]">
      <svg className="mx-auto block" width="22" height="8" viewBox="0 0 22 8"><path d="M11 0 22 8H0Z" fill="#777" /></svg>
      <div className="mt-[9px] text-center text-[40px] leading-[50px] text-[#cf3f3a]"><Num>3883.56</Num></div>
      <div className="flex items-center justify-between pr-[16px] pl-10 leading-[50px]">
        <span className="text-[35px] text-[#666]">上证</span>
        <span className="text-[38px] text-[#cf3f3a]"><Num>1.51%</Num></span>
      </div>
    </div>
    {bottomItems.map((item) => (
      <div key={item.name} className="flex w-[201px] flex-col items-center pt-[9px] text-[35px] text-[#666]">
        <svg className="overflow-visible" width="64" height="62" viewBox="0 0 64 62">{item.icon}</svg>
        <span className="mt-[11px] leading-[52px]">{item.name}</span>
      </div>
    ))}
  </div>
);

const App: React.FC = () => {
  return (
    <div className="h-[2373px] w-[1080px] overflow-hidden bg-[#fefefe] font-['Roboto','Noto_Sans_CJK_SC',sans-serif]">
      <StatusBar />
      <Header />
      <div className="flex h-[120px] items-center justify-between bg-[#fbeee6] pr-[43px] pl-9 text-[42px] leading-none text-[#d2622c]">
        <span className="pt-0.5 whitespace-nowrap">一键开通科创成长层权限！把握打新、交易机会</span>
        <Close size={34} color="#d2622c" />
      </div>
      <Quote />
      <News />
      <PeriodTabs />
      <MaBar />
      <PriceChart />
      <VolumeBar />
      <VolumeChart />
      <Promo />
      <div className="flex h-[88px] items-center border-t-2 border-b-2 border-[#dcdcdc] pt-[22px] pl-[27px] text-[43px] leading-none text-[#666]">
        {['股吧', '盘口', '资讯', '公告', '研报', '财务', '资料'].map((tab, i) => (
          <span key={tab} className={`w-[146.400px] shrink-0 text-center ${i === 0 ? 'text-[#d2622c]' : ''}`}>{tab}</span>
        ))}
      </div>
      <BottomBar />
      <div className="flex h-[130px] items-center pl-[251px]">
        <svg width="36" height="36" viewBox="0 0 36 36"><path d="M0 2h36M0 18h36M0 34h36" stroke="#999" strokeWidth="2.800" /></svg>
        <div className="ml-[233px] h-[35px] w-[35px] rounded-lg border-2 border-[#999]" />
        <svg className="ml-[231px]" width="34" height="36" viewBox="0 0 34 36">
          <path d="M32 4v28a2 2 0 0 1-3 1.500L2.500 19.500a2 2 0 0 1 0-3L29 2.500A2 2 0 0 1 32 4Z" fill="none" stroke="#999" strokeWidth="2.400" strokeLinejoin="round" />
        </svg>
      </div>
    </div>
  );
};

export default App;
